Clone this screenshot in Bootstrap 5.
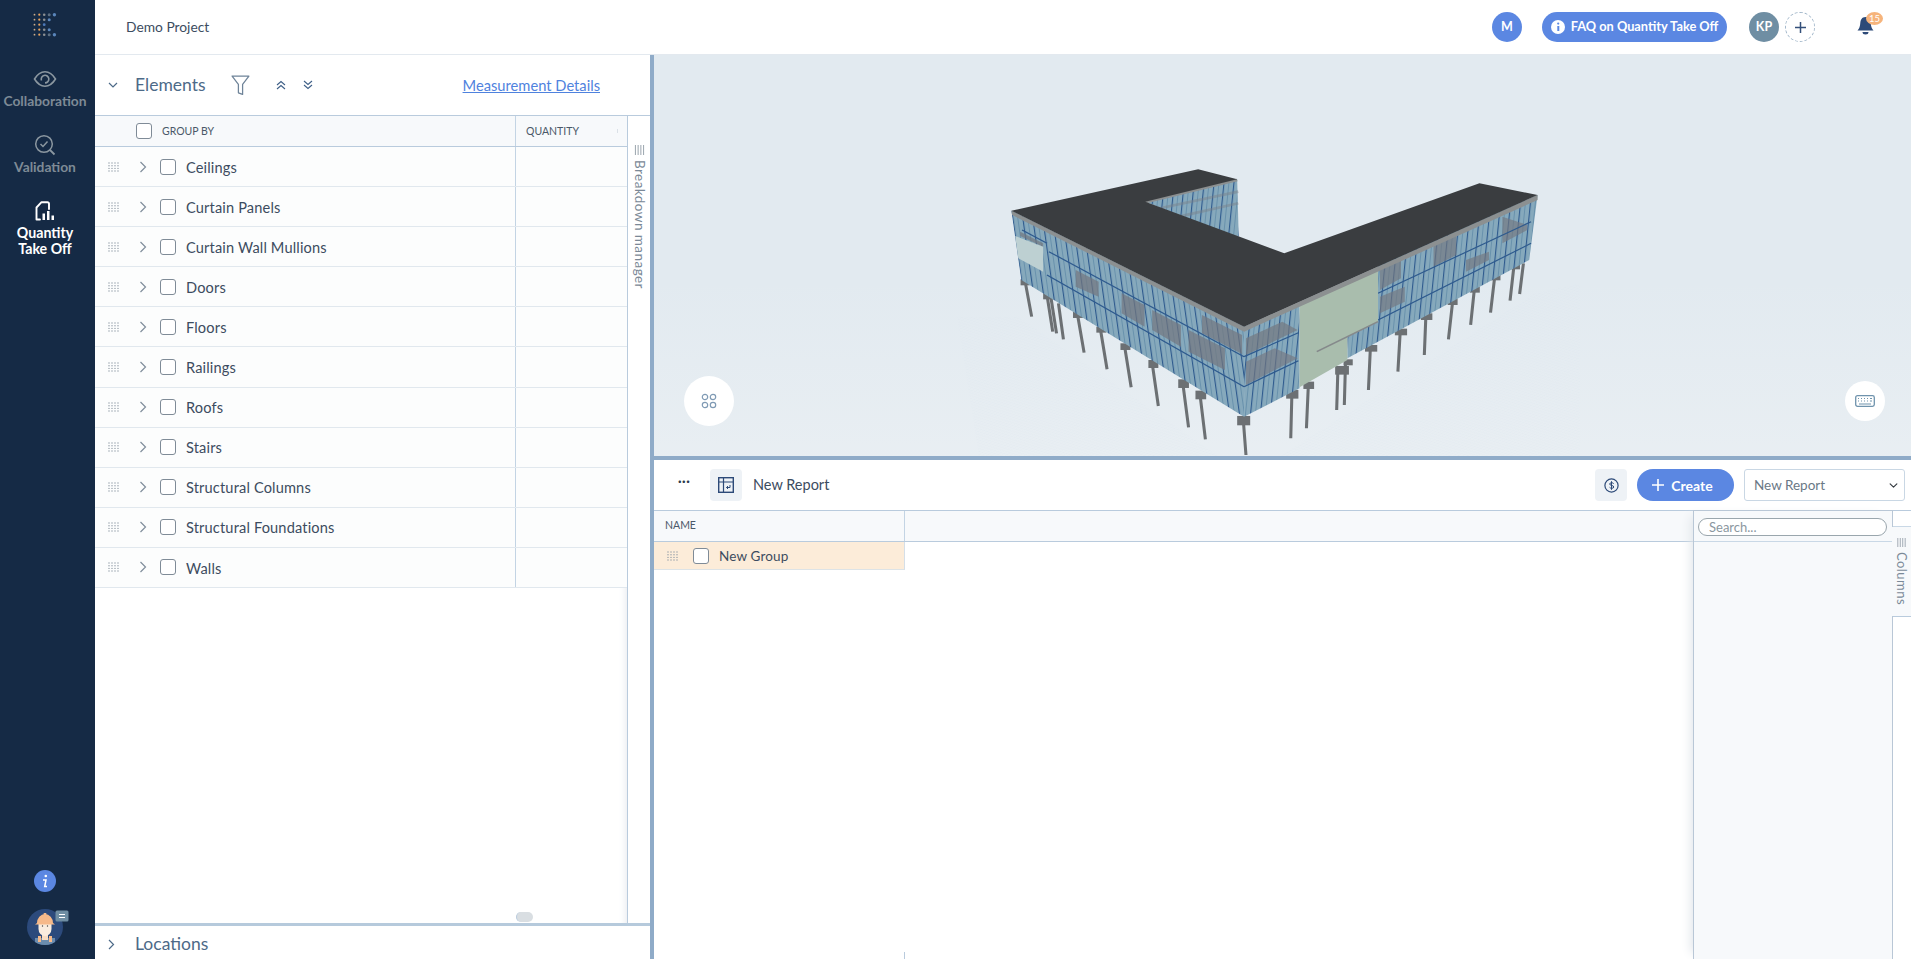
<!DOCTYPE html>
<html lang="en">
<head>
<meta charset="utf-8">
<title>Quantity Take Off</title>
<link href="https://cdn.jsdelivr.net/npm/bootstrap@5.3.0/dist/css/bootstrap.min.css" rel="stylesheet">
<style>
html,body{height:100%;overflow:hidden;background:#fff;font-family:"Lato","Liberation Sans",sans-serif;color:#3c4c60}
.flex-none{flex:none}
.app-rail{width:95px;background:#152a45;flex:none}
.rail-logo{height:66px}
.rail-item{height:66px;color:#7e8a96;font-size:13.8px;font-weight:700;line-height:16px;text-align:center;padding-right:5px}
.rail-item.on{color:#fff;font-size:14.2px;line-height:16px}
.rail-icon{height:26px;display:flex;align-items:center;justify-content:center;margin-bottom:1px}
.rail-foot{padding-bottom:13px;padding-right:5px;gap:16px}
.top-bar{height:55px;border-bottom:1px solid #e3e9ef;padding-left:31px;padding-right:28px;font-size:13.8px}
.circ{width:30px;height:30px;border-radius:50%;color:#fff;font-size:12.5px;font-weight:700}
.circ-blue{background:#5b87e2}
.circ-slate{background:#6f8ea3}
.circ-add{background:#fff;border:1px dashed #a3b8cb;color:#34507a;margin-left:6px}
.faq-pill{height:30px;width:185px;border-radius:15px;background:#5b87e2;color:#fff;font-size:12.8px;font-weight:700;gap:6px;border:0;padding:0}
.bell-wrap{width:26px;height:30px;margin-left:42px}
.bell-num{position:absolute;left:9px;top:0;width:17px;height:13px;border-radius:50%;background:#f6b47c;color:#fff;font-size:9.5px;line-height:13px;text-align:center}
.left-pane{width:555px;flex:none}
.pane-split{width:4px;flex:none;background:#8fabc8}
.el-head{height:60px;padding-left:13px}
.el-title{font-size:17.5px;color:#4d6a88;margin-left:17px}
.el-link{font-size:14.7px;color:#4f82de;text-decoration:underline;margin-right:50px}
.tbl-wrap{width:532px;flex:none;box-shadow:inset -10px 0 8px -10px #dde3e8;position:relative}
.hd-row{height:32px;background:#f7f9fb;border-top:1px solid #b9cbdd;border-bottom:1px solid #b9cbdd;font-size:10.5px;color:#4a5868}
.hd-row span,.hd-qty{padding-top:1px}
.c-main{width:421px;flex:none;border-right:1px solid #c3d4e4;height:100%}
.hd-box{padding-left:41px;gap:10px}
.hd-qty{padding-left:10px;position:relative;flex:1}
.hd-qty::after{content:"";position:absolute;right:9px;top:6px;bottom:6px;border-right:1px solid #dbe1e7}
.d-row{height:40.1px;border-bottom:1px solid #e1e8ee;background:#fcfdfd;font-size:14.6px;color:#3c4c60}
.d-box{padding-left:13px}
.d-grip{width:12px;margin-right:19px}
.d-chev{width:8px;margin-right:13px}
.cb.form-check-input{width:16px;height:16px;margin:0;border:1.5px solid #7f8b97;border-radius:3px;flex:none}
.d-name{margin-left:10px;padding-top:2px;letter-spacing:.15px}
.fill-col{flex:1;min-height:0}
.scroll-dot{position:absolute;left:421px;bottom:1px;width:17px;height:10px;border-radius:5px;background:#d9dee2;border-left:1px solid #b9cbdd}
.v-strip{flex:1;border-left:1px solid #b9cbdd;border-top:1px solid #b9cbdd;padding-top:29px;gap:5px;color:#7a8896;font-size:13.5px}
.v-text{writing-mode:vertical-rl;letter-spacing:.45px;line-height:1}
.loc-row{height:36px;border-top:3px solid #b6cadc;padding-left:13px;padding-top:3px}
.viewer{height:401px;background:#e2eaf0;position:relative;flex:none}
.viewer-art{display:block;width:100%;height:100%}
.vw-btn{position:absolute;background:#fff;border-radius:50%}
.vw-a{left:30px;top:321px;width:50px;height:50px}
.vw-b{left:1191px;top:326px;width:40px;height:40px}
.h-split{height:4px;background:#8fabc8;flex:none}
.rep-bar{height:50px;padding-left:24px;padding-right:6px;flex:none}
.rep-dots{width:32px;color:#2b3a4c;font-weight:700;font-size:13px;letter-spacing:.5px;padding-bottom:6px}
.sq-btn{width:32px;height:32px;background:#eef2f6;border-radius:4px;flex:none;border:0;padding:0}
.rep-title{font-size:14.5px;margin-left:11px}
.create-pill{width:97px;height:32px;border-radius:16px;background:#5b87e2;color:#fff;font-size:14px;font-weight:700;padding:0 6px 0 0;border:0;gap:7px;margin-left:10px}
.create-pill:hover{background:#5b87e2;color:#fff}
.rep-select.form-select{width:161px;height:32px;margin-left:10px;padding:0 20px 0 9px;font-size:13.5px;color:#6a7886;border:1px solid #c9d7e4;border-radius:3px;background-position:right 6px center;background-size:9px}
.rep-body{flex:1;min-height:0}
.g-main{flex:1;min-width:0}
.g-head{height:32px;background:#f7f9fb;border-top:1px solid #b9cbdd;border-bottom:1px solid #b9cbdd;font-size:10.5px;color:#4a5868;flex:none}
.g-name{width:251px;height:100%;border-right:1px solid #c3d4e4;padding-left:11px}
.g-row{width:251px;height:28px;background:#fcecd9;border-right:1px solid #d5dfe8;border-bottom:1px solid #dde3e6;padding-left:13px;font-size:13.5px}
.g-row .d-grip{margin-right:14px}
.g-tick{width:251px;height:7px;border-right:1px solid #b9cbdd;margin-top:auto;flex:none}
.tool-pane{width:200px;flex:none;background:#f7f9fb;border:1px solid #b9c7d6;border-bottom:0;box-shadow:-8px 0 10px -6px #e0e5ea}
.tool-top{height:31px;border-bottom:1px solid #c9d8e6;padding:7px 5px 0 4px;flex:none}
.tool-search.form-control{height:18px;border-radius:9px;border:1px solid #9aa6ad;padding:0 10px;font-size:13px;line-height:16px;background:#fff;min-height:0}
.tool-search::placeholder{color:#8b97a0}
.end-strip{width:18px;flex:none}
.end-a{height:17px;border-top:1px solid #b9cbdd;border-bottom:1px solid #c9d8e6;flex:none}
.end-b{height:89px;width:19px;margin-left:-1px;position:relative;background:#f7f9fb;color:#7b8a98;font-size:13px;padding-top:11px;gap:5px;flex:none}
.end-c{flex:1;border-top:1px solid #b9cbdd}
</style>
</head>
<body>
<svg width="0" height="0" class="position-absolute">
  <defs>
    <symbol id="i-grip" viewBox="0 0 12 10"><g fill="#8f9aa5"><circle cx="1" cy="1" r=".7"/><circle cx="4" cy="1" r=".7"/><circle cx="7" cy="1" r=".7"/><circle cx="10" cy="1" r=".7"/><circle cx="1" cy="3.7" r=".7"/><circle cx="4" cy="3.7" r=".7"/><circle cx="7" cy="3.7" r=".7"/><circle cx="10" cy="3.7" r=".7"/><circle cx="1" cy="6.4" r=".7"/><circle cx="4" cy="6.4" r=".7"/><circle cx="7" cy="6.4" r=".7"/><circle cx="10" cy="6.4" r=".7"/><circle cx="1" cy="9" r=".7"/><circle cx="4" cy="9" r=".7"/><circle cx="7" cy="9" r=".7"/><circle cx="10" cy="9" r=".7"/></g></symbol>
    <symbol id="i-right" viewBox="0 0 8 12"><path d="M1.5 1l5 5-5 5" fill="none" stroke="#7f8d9b" stroke-width="1.2"/></symbol>
    <symbol id="i-bars" viewBox="0 0 11 11"><path d="M1 0v11M4 0v11M7 0v11M10 0v11" stroke="#8f9aa5" stroke-width="1" fill="none"/></symbol>
  </defs>
</svg>

<div class="d-flex vh-100">
  <aside class="app-rail d-flex flex-column">
    <div class="rail-logo position-relative">
      <svg width="95" height="66" viewBox="0 0 95 66" class="d-block">
        <g fill="#cfae8a"><circle cx="34.5" cy="14.7" r=".9"/><circle cx="34.5" cy="19.7" r=".9"/><circle cx="34.5" cy="24.7" r=".9"/><circle cx="34.5" cy="29.7" r=".9"/><circle cx="34.5" cy="34.7" r=".9"/></g>
        <g fill="#e8a45f"><circle cx="39.3" cy="14.7" r="1.1"/><circle cx="39.3" cy="19.7" r="1.1"/><circle cx="39.3" cy="24.7" r="1.1"/><circle cx="39.3" cy="29.7" r="1.1"/><circle cx="39.3" cy="34.7" r="1.1"/></g>
        <g fill="#8b8f92"><circle cx="44.2" cy="14.7" r="1.3"/><circle cx="44.2" cy="19.7" r="1.3"/><circle cx="44.2" cy="29.7" r="1.3"/><circle cx="44.2" cy="34.7" r="1.3"/></g>
        <circle cx="44.2" cy="24.7" r="1.4" fill="#4c78b8"/>
        <g fill="#5d6f82"><circle cx="49.2" cy="14.7" r="1.5"/><circle cx="49.2" cy="34.7" r="1.5"/></g>
        <g fill="#5a86bb"><circle cx="49.2" cy="19.7" r="1.5"/><circle cx="49.2" cy="29.7" r="1.5"/><circle cx="54.4" cy="14.7" r="1.7"/><circle cx="54.4" cy="34.7" r="1.7"/></g>
      </svg>
    </div>
    <a class="rail-item d-block text-decoration-none" href="#">
      <span class="rail-icon"><svg width="24" height="16" viewBox="0 0 24 16"><path d="M1.5 8C5 2.3 8.3 .8 12 .8S19 2.3 22.5 8C19 13.7 15.7 15.2 12 15.2S5 13.7 1.5 8Z" fill="none" stroke="#8b97a0" stroke-width="1.6"/><path d="M8.5 9.5a3.8 3.8 0 1 1 3.5 2.4" fill="none" stroke="#8b97a0" stroke-width="1.6"/></svg></span>Collaboration</a>
    <a class="rail-item d-block text-decoration-none" href="#">
      <span class="rail-icon"><svg width="22" height="22" viewBox="0 0 22 22"><circle cx="10" cy="10" r="8.3" fill="none" stroke="#8b97a0" stroke-width="1.5"/><path d="M6.500 10l2.500 2.500 4.500-5" fill="none" stroke="#8b97a0" stroke-width="1.5"/><path d="M16 16l4.500 4.500" stroke="#8b97a0" stroke-width="1.8"/></svg></span>Validation</a>
    <a class="rail-item on d-block text-decoration-none" href="#">
      <span class="rail-icon"><svg width="20" height="20" viewBox="0 0 20 20"><path d="M5 18.500H1.500V6.500L6.500 1.200H12.500a1.500 1.500 0 0 1 1.500 1.500V8" fill="none" stroke="#fff" stroke-width="1.9" stroke-linejoin="round" stroke-linecap="round"/><rect x="7.5" y="12.5" width="2.5" height="6.5" fill="#fff"/><rect x="12" y="10" width="2.5" height="9" fill="#fff"/><rect x="16.5" y="14.5" width="2.5" height="4.5" fill="#fff"/></svg></span>Quantity<br>Take Off</a>
    <div class="rail-foot mt-auto d-flex flex-column align-items-center">
      <span class="d-flex align-items-center justify-content-center rounded-circle circ-blue" style="width:22px;height:22px"><svg width="6" height="14" viewBox="0 0 6 14"><circle cx="3.8" cy="2" r="1.3" fill="#fff"/><path d="M1 6h3l-1.300 6.500H5" fill="none" stroke="#fff" stroke-width="1.5"/></svg></span>
      <svg width="44" height="38" viewBox="0 0 44 38" class="ms-2">
        <defs><clipPath id="av"><circle cx="18" cy="19" r="18"/></clipPath></defs>
        <circle cx="18" cy="19" r="18" fill="#2c4a7c"/>
        <g clip-path="url(#av)">
          <rect x="8" y="30" width="20" height="8" fill="#6c8dae"/>
          <rect x="11" y="28" width="3" height="6" fill="#f6b98a"/><rect x="22" y="28" width="3" height="6" fill="#f6b98a"/>
          <rect x="15" y="25" width="6" height="7" fill="#f7dcc3"/>
          <path d="M11.500 14h13v7a6.500 7 0 0 1-13 0z" fill="#f9ecdf"/>
          <circle cx="15.5" cy="18" r=".7" fill="#444"/><circle cx="20.5" cy="18" r=".7" fill="#444"/>
          <path d="M10 15a8 9 0 0 1 16 0l2 1.500H8z" fill="#f6b98a"/>
          <rect x="16.7" y="5" width="2.6" height="4" fill="#f6b98a"/>
        </g>
        <path d="M30 2.500h10a1.500 1.500 0 0 1 1.500 1.500v8a1.500 1.500 0 0 1-1.500 1.500H30a1.500 1.500 0 0 1-1.500-1.500V4A1.500 1.500 0 0 1 30 2.500z" fill="#6f8ea3"/>
        <path d="M32 6.500h6M32 9.500h6" stroke="#fff" stroke-width="1.2"/>
      </svg>
    </div>
  </aside>

  <div class="d-flex flex-column flex-grow-1" style="min-width:0">
    <header class="top-bar d-flex align-items-center flex-none">
      <span>Demo Project</span>
      <div class="ms-auto d-flex align-items-center">
        <span class="circ circ-blue d-flex align-items-center justify-content-center">M</span>
        <button type="button" class="btn faq-pill d-flex align-items-center justify-content-center" style="margin-left:20px">
          <svg width="14" height="14" viewBox="0 0 14 14"><circle cx="7" cy="7" r="7" fill="#fff"/><circle cx="7.2" cy="3.6" r="1.1" fill="#5b87e2"/><path d="M7.3 6v5" stroke="#5b87e2" stroke-width="2"/></svg>
          FAQ on Quantity Take Off</button>
        <span class="circ circ-slate d-flex align-items-center justify-content-center" style="margin-left:22px">KP</span>
        <span class="circ circ-add d-flex align-items-center justify-content-center"><svg width="11" height="11" viewBox="0 0 11 11"><path d="M5.500 0v11M0 5.500h11" stroke="#34507a" stroke-width="1.5"/></svg></span>
        <span class="bell-wrap position-relative d-block">
          <svg width="17" height="18" viewBox="0 0 17 18" class="position-absolute" style="left:0;top:5px"><path d="M8.500 0C4.800 0 3.500 3 3.300 6c-.2 3.500-1 5.500-2.800 7.500h16c-1.800-2-2.600-4-2.800-7.500C13.500 3 12.200 0 8.500 0z" fill="#2d4a78"/><path d="M5.500 15h6a3 2.500 0 0 1-6 0z" fill="#2d4a78"/></svg>
          <span class="bell-num">15</span>
        </span>
      </div>
    </header>

    <div class="d-flex flex-grow-1" style="min-height:0">
      <section class="left-pane d-flex flex-column">
        <div class="el-head d-flex align-items-center flex-none">
          <svg width="10" height="7" viewBox="0 0 10 7"><path d="M1 1l4 4 4-4" fill="none" stroke="#4d6a88" stroke-width="1.2"/></svg>
          <span class="el-title">Elements</span>
          <svg style="margin-left:25px" width="19" height="21" viewBox="0 0 18 20"><path d="M1 1h16l-6 8v9.500L7 17V9z" fill="none" stroke="#6f8499" stroke-width="1.2" stroke-linejoin="round"/></svg>
          <svg style="margin-left:25px" width="12" height="10" viewBox="0 0 10 10"><path d="M1 5l4-3.500L9 5M1 9l4-3.500L9 9" fill="none" stroke="#3e5f87" stroke-width="1.1"/></svg>
          <svg style="margin-left:15px" width="12" height="10" viewBox="0 0 10 10"><path d="M1 1l4 3.500L9 1M1 5l4 3.500L9 5" fill="none" stroke="#3e5f87" stroke-width="1.1"/></svg>
          <a href="#" class="el-link ms-auto">Measurement Details</a>
        </div>
        <div class="d-flex flex-grow-1" style="min-height:0">
          <div class="tbl-wrap d-flex flex-column">
            <div class="hd-row d-flex align-items-center flex-none">
              <div class="c-main hd-box d-flex align-items-center"><input class="form-check-input cb" type="checkbox" aria-label="all"><span>GROUP BY</span></div>
              <div class="hd-qty d-flex align-items-center">QUANTITY</div>
            </div>
            <div class="d-row d-flex align-items-center"><div class="c-main d-box d-flex align-items-center"><svg class="d-grip" height="10"><use href="#i-grip"/></svg><svg class="d-chev" height="12"><use href="#i-right"/></svg><input class="form-check-input cb" type="checkbox" aria-label="row"><span class="d-name">Ceilings</span></div></div>
            <div class="d-row d-flex align-items-center"><div class="c-main d-box d-flex align-items-center"><svg class="d-grip" height="10"><use href="#i-grip"/></svg><svg class="d-chev" height="12"><use href="#i-right"/></svg><input class="form-check-input cb" type="checkbox" aria-label="row"><span class="d-name">Curtain Panels</span></div></div>
            <div class="d-row d-flex align-items-center"><div class="c-main d-box d-flex align-items-center"><svg class="d-grip" height="10"><use href="#i-grip"/></svg><svg class="d-chev" height="12"><use href="#i-right"/></svg><input class="form-check-input cb" type="checkbox" aria-label="row"><span class="d-name">Curtain Wall Mullions</span></div></div>
            <div class="d-row d-flex align-items-center"><div class="c-main d-box d-flex align-items-center"><svg class="d-grip" height="10"><use href="#i-grip"/></svg><svg class="d-chev" height="12"><use href="#i-right"/></svg><input class="form-check-input cb" type="checkbox" aria-label="row"><span class="d-name">Doors</span></div></div>
            <div class="d-row d-flex align-items-center"><div class="c-main d-box d-flex align-items-center"><svg class="d-grip" height="10"><use href="#i-grip"/></svg><svg class="d-chev" height="12"><use href="#i-right"/></svg><input class="form-check-input cb" type="checkbox" aria-label="row"><span class="d-name">Floors</span></div></div>
            <div class="d-row d-flex align-items-center"><div class="c-main d-box d-flex align-items-center"><svg class="d-grip" height="10"><use href="#i-grip"/></svg><svg class="d-chev" height="12"><use href="#i-right"/></svg><input class="form-check-input cb" type="checkbox" aria-label="row"><span class="d-name">Railings</span></div></div>
            <div class="d-row d-flex align-items-center"><div class="c-main d-box d-flex align-items-center"><svg class="d-grip" height="10"><use href="#i-grip"/></svg><svg class="d-chev" height="12"><use href="#i-right"/></svg><input class="form-check-input cb" type="checkbox" aria-label="row"><span class="d-name">Roofs</span></div></div>
            <div class="d-row d-flex align-items-center"><div class="c-main d-box d-flex align-items-center"><svg class="d-grip" height="10"><use href="#i-grip"/></svg><svg class="d-chev" height="12"><use href="#i-right"/></svg><input class="form-check-input cb" type="checkbox" aria-label="row"><span class="d-name">Stairs</span></div></div>
            <div class="d-row d-flex align-items-center"><div class="c-main d-box d-flex align-items-center"><svg class="d-grip" height="10"><use href="#i-grip"/></svg><svg class="d-chev" height="12"><use href="#i-right"/></svg><input class="form-check-input cb" type="checkbox" aria-label="row"><span class="d-name">Structural Columns</span></div></div>
            <div class="d-row d-flex align-items-center"><div class="c-main d-box d-flex align-items-center"><svg class="d-grip" height="10"><use href="#i-grip"/></svg><svg class="d-chev" height="12"><use href="#i-right"/></svg><input class="form-check-input cb" type="checkbox" aria-label="row"><span class="d-name">Structural Foundations</span></div></div>
            <div class="d-row d-flex align-items-center"><div class="c-main d-box d-flex align-items-center"><svg class="d-grip" height="10"><use href="#i-grip"/></svg><svg class="d-chev" height="12"><use href="#i-right"/></svg><input class="form-check-input cb" type="checkbox" aria-label="row"><span class="d-name">Walls</span></div></div>
            <div class="fill-col"></div>
            <span class="scroll-dot"></span>
          </div>
          <div class="v-strip d-flex flex-column align-items-center">
            <svg width="11" height="10"><use href="#i-bars"/></svg>
            <span class="v-text">Breakdown manager</span>
          </div>
        </div>
        <div class="loc-row d-flex align-items-center flex-none">
          <svg width="7" height="11" viewBox="0 0 7 11"><path d="M1 1l4.500 4.500L1 10" fill="none" stroke="#4d6a88" stroke-width="1.2"/></svg>
          <span class="el-title" style="margin-left:20px">Locations</span>
        </div>
      </section>
      <div class="pane-split"></div>

      <section class="d-flex flex-column flex-grow-1" style="min-width:0">
        <div class="viewer">
          <svg class="viewer-art" viewBox="654 55 1257 401" role="img" aria-label="3D building model">
            <defs>
              <pattern id="gridp" width="11" height="11" patternUnits="userSpaceOnUse" patternTransform="skewX(-32) scale(1 .55) rotate(28)"><path d="M0 0H11M0 0V11" stroke="#d6e0e7" stroke-width=".5" fill="none"/></pattern>
              <linearGradient id="floorg" x1="0" y1="0" x2="0" y2="1"><stop offset="0" stop-color="#eef2f5" stop-opacity="0"/><stop offset="1" stop-color="#eef2f5" stop-opacity=".55"/></linearGradient>
              <pattern id="mullL" width="26" height="100" patternUnits="userSpaceOnUse" patternTransform="skewX(7)"><rect width="26" height="100" fill="#86a9bc"/><rect width="3" height="100" fill="#2e5a8e"/><rect x="13" width="2" height="100" fill="#5f8aa8"/></pattern>
              <pattern id="mullR" width="26" height="100" patternUnits="userSpaceOnUse" patternTransform="skewX(-5)"><rect width="26" height="100" fill="#86a9bc"/><rect width="3" height="100" fill="#2e5a8e"/><rect x="13" width="2" height="100" fill="#5f8aa8"/></pattern>
            </defs>
            <g transform="translate(980 130) scale(.3827 .3333)">
              <rect x="-900" y="450" width="3400" height="550" fill="url(#floorg)"/>
              <polygon points="100,560 700,1040 1450,490 1568,460 1568,1000 0,1000 -60,560" fill="url(#gridp)" opacity=".9"/>
              <!-- courtyard facade -->
              <polygon points="432,215 672,148 676,320 640,310" fill="url(#mullR)"/>
              <path d="M470 235l205-50M520 260l155-40" stroke="#7a8088" stroke-width="8" opacity=".45"/>
              <!-- columns -->
              <path d="M118 455L135 560M175 495L190 605M185 500L200 610M205 520L218 628M255 555L272 668M315 600L332 718M378 650L395 772M450 700L466 828M530 760L545 892M575 795L589 928M688 870L695 975M815 790L812 925M858 765L853 895M935 725L932 840M955 700L952 825M1020 655L1015 780M1098 605L1092 725M1165 560L1161 675M1235 515L1224 628M1292 475L1282 585M1345 440L1334 548M1395 410L1385 512M1420 400L1410 492" stroke="#6c7073" stroke-width="8" fill="none"/>
              <g fill="#6c7073">
                <rect x="106" y="448" width="24" height="18"/><rect x="165" y="490" width="32" height="18"/><rect x="243" y="546" width="26" height="18"/><rect x="304" y="590" width="26" height="18"/><rect x="367" y="640" width="26" height="20"/><rect x="440" y="690" width="26" height="24"/><rect x="518" y="748" width="28" height="26"/><rect x="563" y="782" width="28" height="26"/><rect x="672" y="858" width="34" height="28"/><rect x="800" y="780" width="32" height="26"/><rect x="845" y="755" width="28" height="22"/><rect x="928" y="708" width="36" height="26"/><rect x="950" y="688" width="24" height="18"/><rect x="1006" y="645" width="32" height="20"/><rect x="1084" y="596" width="32" height="20"/><rect x="1152" y="550" width="30" height="20"/><rect x="1222" y="505" width="26" height="20"/><rect x="1280" y="470" width="26" height="18"/><rect x="1334" y="433" width="26" height="18"/><rect x="1385" y="402" width="26" height="16"/>
              </g>
              <!-- left facade -->
              <polygon points="82,242 690,590 690,860 108,450" fill="url(#mullL)"/>
              <!-- slabs seen through glass -->
              <g fill="#74777f" opacity=".7">
                <polygon points="250,420 310,455 310,500 250,470"/>
                <polygon points="370,490 430,525 430,590 370,550"/>
                <polygon points="450,540 525,585 525,650 450,600"/>
                <polygon points="545,600 640,655 640,720 545,665"/>
                <polygon points="580,555 685,615 685,672 580,610"/>
                <polygon points="105,305 165,340 165,350 105,318"/>
              </g>
              <path d="M175 435L690 770M180 365L690 680M110 300L175 340" stroke="#2e5a8e" stroke-width="3.5"/>
              <polygon points="92,318 165,350 165,425 100,385" fill="#bdd0d2"/>
              <!-- front corner -->
              <polygon points="690,590 835,525 835,775 690,860" fill="url(#mullR)"/>
              <polygon points="695,625 790,575 830,600 695,675" fill="#74777f" opacity=".7"/>
              <polygon points="695,695 770,655 830,685 695,765" fill="#74777f" opacity=".65"/>
              <path d="M690 680L832 608M690 770L832 692" stroke="#2e5a8e" stroke-width="3.5"/>
              <!-- right facade -->
              <polygon points="1040,405 1457,195 1435,390 960,685 960,620 1040,575" fill="url(#mullR)"/>
              <g fill="#74777f" opacity=".65">
                <polygon points="1045,412 1100,385 1100,445 1045,480"/>
                <polygon points="1185,345 1245,315 1245,375 1185,410"/>
                <polygon points="1365,260 1430,285 1430,300 1365,340"/>
                <polygon points="1045,500 1110,470 1110,515 1045,550"/>
                <polygon points="1270,390 1330,365 1330,390 1270,425"/>
              </g>
              <path d="M1040 490L1440 275M1040 570L1440 340" stroke="#2e5a8e" stroke-width="3.5"/>
              <!-- green panel -->
              <polygon points="835,525 1040,415 1040,575 960,620 960,690 835,772" fill="#a9bdad"/>
              <path d="M880 665L1040 575" stroke="#85898b" stroke-width="5"/>
              <!-- roof edge -->
              <polygon points="82,242 690,590 1457,195 1457,210 690,605 84,255" fill="#8c9091"/>
              <path d="M432 217L672 150" stroke="#8c9091" stroke-width="8"/>
              <!-- roof -->
              <polygon points="82,242 570,118 672,148 432,215 795,370 1305,160 1457,195 690,590" fill="#3a3d40"/>
            </g>
          </svg>
          <div class="vw-btn vw-a d-flex align-items-center justify-content-center">
            <svg width="16" height="16" viewBox="0 0 16 16"><g fill="none" stroke="#7f9ab4" stroke-width="1.2"><circle cx="4" cy="4" r="2.7"/><circle cx="12" cy="4" r="2.7"/><circle cx="4" cy="12" r="2.7"/><circle cx="12" cy="12" r="2.7"/></g></svg>
          </div>
          <div class="vw-btn vw-b d-flex align-items-center justify-content-center">
            <svg width="20" height="12" viewBox="0 0 20 12"><rect x=".7" y=".7" width="18.6" height="10.6" rx="1.8" fill="none" stroke="#6f93ad" stroke-width="1.3"/><path d="M3 3.500h1M6 3.500h1M9 3.500h1M12 3.500h1M15 3.500h2M3 6h1M6 6h1M9 6h1M12 6h1M15 6h2M4 9h12" stroke="#6f93ad" stroke-width="1.1"/></svg>
          </div>
        </div>
        <div class="h-split"></div>
        <div class="rep-bar d-flex align-items-center">
          <span class="rep-dots text-start">&middot;&middot;&middot;</span>
          <button type="button" class="btn sq-btn d-flex align-items-center justify-content-center" aria-label="Layout">
            <svg width="16" height="16" viewBox="0 0 16 16"><rect x=".7" y=".7" width="14.6" height="14.6" fill="none" stroke="#2d4a78" stroke-width="1.4"/><path d="M.7 5h14.600M5.500 .7v14.600" stroke="#2d4a78" stroke-width="1.2" fill="none"/><path d="M12 8v2.500H8.500M10 9l-1.500 1.500L10 12" stroke="#2d4a78" stroke-width="1" fill="none"/></svg>
          </button>
          <span class="rep-title">New Report</span>
          <button type="button" class="btn sq-btn d-flex align-items-center justify-content-center ms-auto" aria-label="Cost">
            <svg width="15" height="15" viewBox="0 0 15 15"><circle cx="7.5" cy="7.5" r="6.6" fill="none" stroke="#2d4a78" stroke-width="1.2"/><path d="M9.700 5.600c-.4-1-3.900-1.500-4 .4-.1 2 4.200 1 4.100 3 0 1.800-3.700 1.500-4.200.3M7.500 3.200v8.600" fill="none" stroke="#2d4a78" stroke-width="1"/></svg>
          </button>
          <button type="button" class="btn create-pill d-flex align-items-center justify-content-center">
            <svg width="12" height="12" viewBox="0 0 12 12"><path d="M6 0v12M0 6h12" stroke="#fff" stroke-width="1.6"/></svg>Create</button>
          <select class="form-select rep-select" aria-label="Report"><option>New Report</option></select>
        </div>
        <div class="rep-body d-flex">
          <div class="g-main d-flex flex-column">
            <div class="g-head d-flex align-items-center"><div class="g-name d-flex align-items-center">NAME</div></div>
            <div class="g-row d-flex align-items-center flex-none"><svg class="d-grip" height="10"><use href="#i-grip"/></svg><input class="form-check-input cb" type="checkbox" aria-label="row"><span class="d-name">New Group</span></div>
            <div class="g-tick"></div>
          </div>
          <aside class="tool-pane d-flex flex-column">
            <div class="tool-top"><input class="form-control tool-search" type="text" placeholder="Search..."></div>
          </aside>
          <div class="end-strip d-flex flex-column">
            <div class="end-a"></div>
            <div class="end-b d-flex flex-column align-items-center">
              <svg width="11" height="9"><use href="#i-bars"/></svg>
              <span class="v-text">Columns</span>
            </div>
            <div class="end-c"></div>
          </div>
        </div>
      </section>
    </div>
  </div>
</div>
<script src="https://cdn.jsdelivr.net/npm/bootstrap@5.3.0/dist/js/bootstrap.bundle.min.js"></script>
</body>
</html>
